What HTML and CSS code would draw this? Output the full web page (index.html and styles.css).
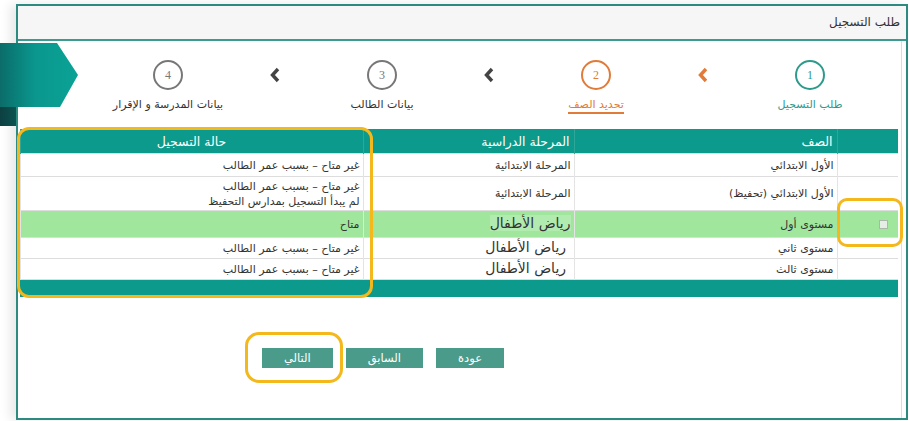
FILE: index.html
```html
<!doctype html>
<html lang="ar" dir="rtl">

<head>
    <meta charset="utf-8">
    <title>طلب التسجيل</title>
    <link rel="stylesheet" href="styles.css">
</head>

<body>
    <div class="ribbon">
        <svg width="80" height="84" viewBox="0 0 80 84">
            <defs>
                <linearGradient id="band" x1="0" y1="0" x2="1" y2="0">
                    <stop offset="0" stop-color="#0b6c69" />
                    <stop offset="0.45" stop-color="#0a978e" />
                    <stop offset="1" stop-color="#0aa396" />
                </linearGradient>
                <linearGradient id="fold" x1="0" y1="0" x2="1" y2="0">
                    <stop offset="0" stop-color="#0d3f40" />
                    <stop offset="1" stop-color="#0b5352" />
                </linearGradient>
            </defs>
            <rect x="0" y="64" width="16" height="19" fill="url(#fold)" />
            <polygon points="0,0 57,0 78,32 60,64 0,64" fill="url(#band)" />
        </svg>
    </div>

    <div class="frame">
        <div class="frame_head">طلب التسجيل</div>

        <div class="frame_body">
            <div class="steps">
                <div class="step done">
                    <span class="circle">1</span>
                    <span class="label">طلب التسجيل</span>
                </div>
                <div class="chev active">
                    <svg width="12" height="16" viewBox="0 0 12 16"><path d="M9 2 L3.5 8 L9 14" /></svg>
                </div>
                <div class="step active">
                    <span class="circle">2</span>
                    <span class="label">تحديد الصف</span>
                </div>
                <div class="chev">
                    <svg width="12" height="16" viewBox="0 0 12 16"><path d="M9 2 L3.5 8 L9 14" /></svg>
                </div>
                <div class="step">
                    <span class="circle">3</span>
                    <span class="label">بيانات الطالب</span>
                </div>
                <div class="chev">
                    <svg width="12" height="16" viewBox="0 0 12 16"><path d="M9 2 L3.5 8 L9 14" /></svg>
                </div>
                <div class="step">
                    <span class="circle">4</span>
                    <span class="label">بيانات المدرسة و الإقرار</span>
                </div>
            </div>

            <table class="grid">
                <colgroup>
                    <col class="c_wahl">
                    <col class="c_saf">
                    <col class="c_stufe">
                    <col class="c_status">
                </colgroup>
                <tr>
                    <th></th><th>الصف</th><th>المرحلة الدراسية</th><th class="mitte">حالة التسجيل</th>
                </tr>
                <tr class="einfach">
                    <td></td>
                    <td>الأول الابتدائي</td>
                    <td>المرحلة الابتدائية</td>
                    <td>غير متاح – بسبب عمر الطالب</td>
                </tr>
                <tr class="doppelt">
                    <td></td>
                    <td>الأول الابتدائي (تحفيظ)</td>
                    <td>المرحلة الابتدائية</td>
                    <td>غير متاح – بسبب عمر الطالب<br>لم يبدأ التسجيل بمدارس التحفيظ</td>
                </tr>
                <tr class="frei">
                    <td><span class="box"></span></td>
                    <td>مستوى أول</td>
                    <td><span class="kg hell">رياض الأطفال</span></td>
                    <td>متاح</td>
                </tr>
                <tr class="eng">
                    <td></td>
                    <td>مستوى ثاني</td>
                    <td><span class="kg"> رياض الأطفال</span></td>
                    <td>غير متاح – بسبب عمر الطالب</td>
                </tr>
                <tr class="eng">
                    <td></td>
                    <td>مستوى ثالث</td>
                    <td><span class="kg"> رياض الأطفال</span></td>
                    <td>غير متاح – بسبب عمر الطالب</td>
                </tr>
                <tr class="fuss">
                    <td colspan="4"></td>
                </tr>
            </table>

            <div class="buttons">
                <button class="btn">عودة</button>
                <button class="btn">السابق</button>
                <button class="btn">التالي</button>
            </div>
        </div>
    </div>

    <div class="mark mark_status"></div>
    <div class="mark mark_check"></div>
    <div class="mark mark_next"></div>
</body>

</html>
```

FILE: styles.css
```css
body {
    margin: 0;
    width: 909px;
    height: 421px;
    position: relative;
    overflow: hidden;
    background: #fff;
    font-family: "DejaVu Sans", sans-serif;
    font-size: 11px;
    color: #333;
}

.ribbon {
    position: absolute;
    left: 0;
    top: 43px;
    z-index: 2;
    line-height: 0;
}

.frame {
    margin: 4px 1px 0 16px;
    height: 416px;
    box-sizing: border-box;
    border: 2px solid #2d8a80;
    box-shadow: -6px 0 10px rgba(0, 0, 0, 0.09);
}

.frame_head {
    height: 33px;
    line-height: 33px;
    background-color: #f6f6f6;
    border-bottom: 2px solid #3b9b8f;
    padding-right: 6px;
    text-align: right;
    font-size: 12px;
}

.frame_body {
    height: 377px;
    margin-right: 4px;
    border-right: 1px solid #ddd;
    padding: 0 3px 0 2px;
}

/* wizard */
.steps {
    display: flex;
    height: 88px;
    box-sizing: border-box;
    padding: 19px 28px 0 0;
}

.step {
    width: 120px;
    display: flex;
    flex-direction: column;
    align-items: center;
    color: #777;
}

.circle {
    width: 30px;
    height: 30px;
    box-sizing: border-box;
    border: 2px solid currentColor;
    border-radius: 50%;
    display: flex;
    align-items: center;
    justify-content: center;
    font-family: "Liberation Serif", serif;
    font-size: 12px;
}

.label {
    margin-top: 8px;
    font-size: 11px;
    color: #333;
}

.step.done,
.step.done .label {
    color: #2e9a8c;
}

.step.active,
.step.active .label {
    color: #e07b39;
}

.step.active .label {
    border-bottom: 2px solid #e07b39;
    padding-bottom: 1px;
}

.chev {
    width: 94px;
    height: 30px;
    display: flex;
    align-items: center;
    justify-content: center;
}

.chev path {
    fill: none;
    stroke: #444;
    stroke-width: 3.4;
}

.chev.active path {
    stroke: #e07b39;
}

/* table */
.grid {
    width: 100%;
    border-collapse: collapse;
    table-layout: fixed;
}

.c_wahl { width: 61px; }
.c_saf { width: 263px; }
.c_stufe { width: 211px; }
.c_status { width: 343px; }

.grid th {
    height: 24px;
    padding: 0 4px;
    background-color: #0b9a8b;
    color: #fff;
    font-weight: normal;
    font-size: 12.5px;
    text-align: right;
    border-left: 1px solid #2ea698;
}

.grid th.mitte {
    text-align: center;
}

.grid td {
    padding: 0 3px;
    line-height: 15px;
    border-top: 1px solid #ddd;
    border-left: 1px solid #e4e4e4;
    text-align: right;
}

.grid tr.einfach td {
    height: 22px;
}

.grid tr.doppelt td {
    height: 33px;
}

.grid tr.frei td {
    height: 26px;
    background-color: #a0e79d;
}

.grid tr.eng td {
    height: 20px;
}

.kg {
    font-size: 14px;
    white-space: pre;
}

.kg.hell {
    background-color: #b2ebb0;
}

.box {
    display: block;
    width: 9px;
    height: 9px;
    margin-right: 7px;
    box-sizing: border-box;
    border: 1px solid #a9b8a9;
    background-color: #e6ece6;
}

.grid tr.fuss td {
    height: 17px;
    padding: 0;
    background-color: #0b9a8b;
    border-left: none;
}

/* buttons */
.buttons {
    display: flex;
    gap: 13px;
    margin-top: 51px;
    padding-right: 394px;
}

.btn {
    height: 20px;
    padding: 0 22px;
    border: none;
    background-color: #4b9b8b;
    color: #fff;
    font-family: "DejaVu Sans", sans-serif;
    font-size: 11.5px;
}

/* yellow marks */
.mark {
    position: absolute;
    box-sizing: border-box;
    border: 3px solid #f4b81c;
    border-radius: 12px;
    pointer-events: none;
}

.mark_status {
    left: 17px;
    top: 127px;
    width: 356px;
    height: 171px;
}

.mark_check {
    left: 837px;
    top: 198px;
    width: 66px;
    height: 49px;
    border-radius: 10px;
}

.mark_next {
    left: 245px;
    top: 332px;
    width: 98px;
    height: 51px;
    border-radius: 14px;
}
```
